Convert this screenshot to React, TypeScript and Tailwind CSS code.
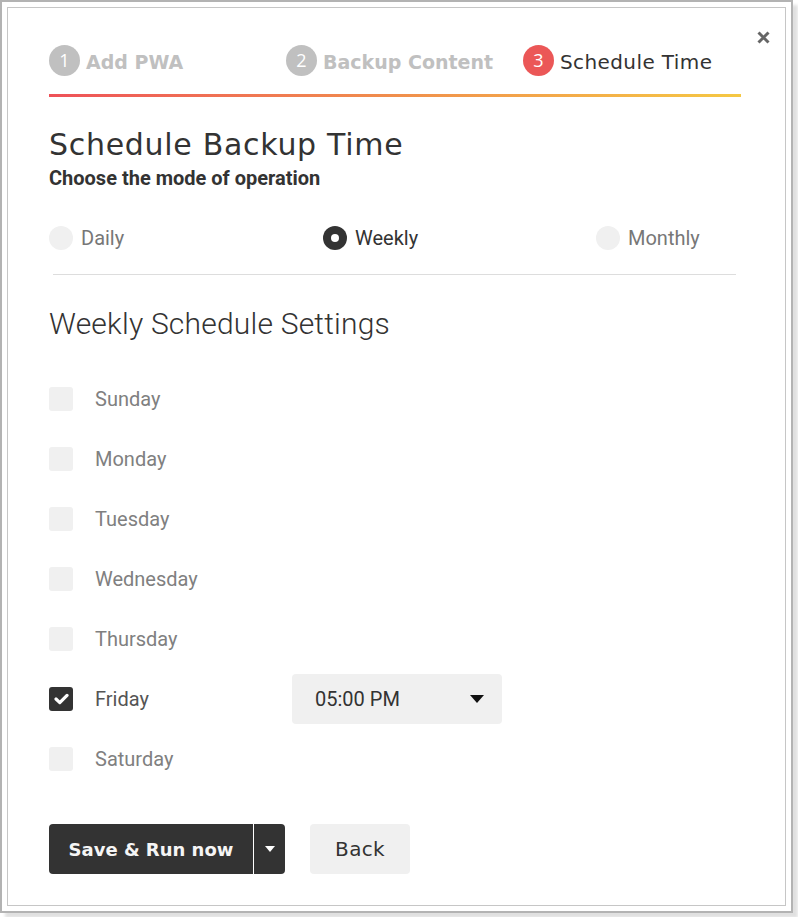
import React, { useState } from 'react';

const days = ['Sunday', 'Monday', 'Tuesday', 'Wednesday', 'Thursday', 'Friday', 'Saturday'];
const modes = ['Daily', 'Weekly', 'Monthly'];

const heading = { fontFamily: '"DejaVu Sans", "Open Sans", sans-serif' };

const Step: React.FC<{ n: number; label: string; active?: boolean }> = ({ n, label, active }) => (
    <div className="flex items-center gap-[6px]">
        <span
            className={`flex h-[31px] w-[31px] items-center justify-center rounded-full text-[18px] text-white ${active ? 'bg-[#eb5757]' : 'bg-[#c0c0c0]'}`}
            style={{ fontFamily: '"Open Sans", sans-serif' }}
        >
            {n}
        </span>
        <span
            className={`pt-[2px] leading-[28px] ${active ? 'text-[20px] tracking-[0.4px] text-[#333]' : 'text-[19px] font-bold text-[#c0c0c0]'}`}
            style={heading}
        >
            {label}
        </span>
    </div>
);

const App: React.FC = () => {
    const [mode, setMode] = useState('Weekly');
    const [checked, setChecked] = useState<string[]>(['Friday']);

    const toggle = (d: string) =>
        setChecked(prev => (prev.includes(d) ? prev.filter(x => x !== d) : [...prev, d]));

    return (
        <div className="h-[917px] w-[798px] bg-white" style={{ fontFamily: 'Roboto, sans-serif' }}>
            <div className="h-[913px] w-[793px] border-2 border-[#b3b3b3] p-[5px] shadow-[5px_5px_3px_rgba(0,0,0,0.12)]">
                <div className="relative h-full w-full border border-[#c6c6c6] pl-[41px] pr-[45px] pt-[37px]">
                    <button className="absolute right-[15px] top-[23px]">
                        <svg width="13" height="13" viewBox="0 0 13 13">
                            <path d="M1.5 1.5 L11.5 11.5 M11.5 1.5 L1.5 11.5" stroke="#666" strokeWidth="3" />
                        </svg>
                    </button>

                    {/* steps */}
                    <div className="flex items-center pb-[18px]">
                        <div className="w-[237px]"><Step n={1} label="Add PWA" /></div>
                        <div className="w-[237px]"><Step n={2} label="Backup Content" /></div>
                        <Step n={3} label="Schedule Time" active />
                    </div>
                    <div className="h-[3px] w-[692px] bg-gradient-to-r from-[#ee5158] via-[#f08e4c] to-[#f5c843]" />

                    <h1 className="mt-[30px] text-[30px] leading-[36px] tracking-[0.7px] text-[#333]" style={heading}>
                        Schedule Backup Time
                    </h1>
                    <p className="mt-[3px] text-[20px] font-bold leading-[24px] text-[#333]">Choose the mode of operation</p>

                    {/* modes */}
                    <div className="mt-[36px] flex items-center">
                        {modes.map((m, i) => (
                            <label
                                key={m}
                                onClick={() => setMode(m)}
                                className={`flex cursor-pointer items-center gap-[8px] ${i === 0 ? 'w-[274px]' : i === 1 ? 'w-[273px]' : ''}`}
                            >
                                <span
                                    className={`flex h-[24px] w-[24px] items-center justify-center rounded-full ${mode === m ? 'bg-[#333]' : 'bg-[#f0f0f0]'}`}
                                >
                                    {mode === m && <span className="h-[8px] w-[8px] rounded-full bg-white" />}
                                </span>
                                <span className={`text-[20px] leading-[24px] ${mode === m ? 'text-[#333]' : 'text-[#777]'}`}>{m}</span>
                            </label>
                        ))}
                    </div>
                    <div className="ml-[4px] mt-[24px] h-px w-[683px] bg-[#dddddd]" />

                    <h2 className="mt-[31px] text-[30px] font-light leading-[36px] tracking-[0.2px] text-[#333]">Weekly Schedule Settings</h2>

                    {/* days */}
                    <div className="mt-[27px] flex flex-col">
                        {days.map(d => {
                            const on = checked.includes(d);
                            return (
                                <div key={d} className="flex h-[60px] items-center">
                                    <label onClick={() => toggle(d)} className="flex w-[243px] cursor-pointer items-center">
                                        <span
                                            className={`flex h-[24px] w-[24px] items-center justify-center rounded-[3px] ${on ? 'bg-[#333]' : 'bg-[#f0f0f0]'}`}
                                        >
                                            {on && (
                                                <svg width="15" height="12" viewBox="0 0 15 12">
                                                    <path d="M2 6 L5.8 9.6 L13 2.4" fill="none" stroke="white" strokeWidth="3.2" strokeLinecap="round" strokeLinejoin="round" />
                                                </svg>
                                            )}
                                        </span>
                                        <span className={`ml-[22px] text-[20px] leading-[24px] ${on ? 'text-[#555]' : 'text-[#808080]'}`}>{d}</span>
                                    </label>
                                    {on && (
                                        <div className="flex h-[50px] w-[210px] items-center justify-between rounded-[4px] bg-[#f0f0f0] pl-[23px] pr-[18px]">
                                            <span className="text-[20px] text-[#333]">05:00 PM</span>
                                            <svg width="14" height="8" viewBox="0 0 14 8">
                                                <path d="M0 0 H14 L7 8 Z" fill="#111" />
                                            </svg>
                                        </div>
                                    )}
                                </div>
                            );
                        })}
                    </div>

                    {/* actions */}
                    <div className="mt-[35px] flex items-center">
                        <button className="h-[50px] w-[204px] rounded-l-[4px] bg-[#333] text-[18px] font-bold text-[#f5f5f5]" style={heading}>
                            Save &amp; Run now
                        </button>
                        <button className="ml-px flex h-[50px] w-[31px] items-center justify-center rounded-r-[4px] bg-[#333]">
                            <svg width="10" height="6" viewBox="0 0 10 6">
                                <path d="M0 0 H10 L5 6 Z" fill="white" />
                            </svg>
                        </button>
                        <button className="ml-[25px] h-[50px] w-[100px] rounded-[4px] bg-[#f0f0f0] text-[20px] tracking-[0.3px] text-[#333]" style={heading}>
                            Back
                        </button>
                    </div>
                </div>
            </div>
        </div>
    );
};

export default App;
